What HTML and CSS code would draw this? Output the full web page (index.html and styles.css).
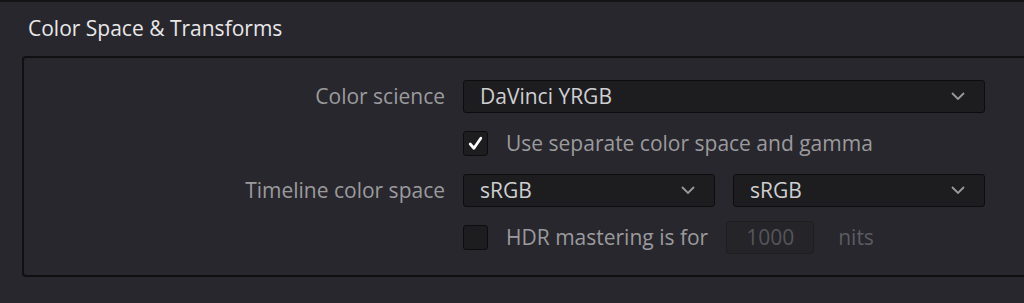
FILE: index.html
```html
<!DOCTYPE html>
<html lang="en">
<head>
<meta charset="UTF-8">
<meta name="viewport" content="width=device-width, initial-scale=1.0">
<title>Color Space &amp; Transforms</title>
<link rel="stylesheet" href="styles.css">
</head>
<body>

<div class="topline"></div>

<div class="section">
  <h1 class="section-title">Color Space &amp; Transforms</h1>

  <div class="panel">
    <div class="row">
      <label class="label">Color science</label>
      <div class="controls">
        <div class="select wide">
          <span>DaVinci YRGB</span>
          <svg class="chevron" viewBox="0 0 14 8"><path d="M1 1 L7 7 L13 1"/></svg>
        </div>
      </div>
    </div>

    <div class="row">
      <span class="label"></span>
      <div class="controls">
        <span class="checkbox checked">
          <svg viewBox="0 0 16 16"><path d="M3 8.5 L6.5 12.5 L13 3"/></svg>
        </span>
        <span class="check-text">Use separate color space and gamma</span>
      </div>
    </div>

    <div class="row">
      <label class="label">Timeline color space</label>
      <div class="controls split">
        <div class="select">
          <span>sRGB</span>
          <svg class="chevron" viewBox="0 0 14 8"><path d="M1 1 L7 7 L13 1"/></svg>
        </div>
        <div class="select">
          <span>sRGB</span>
          <svg class="chevron" viewBox="0 0 14 8"><path d="M1 1 L7 7 L13 1"/></svg>
        </div>
      </div>
    </div>

    <div class="row">
      <span class="label"></span>
      <div class="controls">
        <span class="checkbox"></span>
        <span class="check-text">HDR mastering is for</span>
        <span class="number">1000</span>
        <span class="unit">nits</span>
      </div>
    </div>
  </div>
</div>

</body>
</html>
```

FILE: styles.css
```css
body {
  margin: 0;
  padding: 0;
  background-color: #28272d;
  font-family: "Open Sans", "Liberation Sans", sans-serif;
  overflow: hidden;
}
.topline {
  height: 2px;
  background-color: #141417;
}
.section {
  padding-left: 22px;
}
.section-title {
  margin: 0;
  padding: 12px 0 0 6px;
  height: 42px;
  box-sizing: border-box;
  font-size: 21px;
  font-weight: 400;
  color: #e8e8ea;
  line-height: 28px;
}
.panel {
  margin-right: -10px;
  margin-top: 12px;
  border: 2px solid #101013;
  border-radius: 4px;
  padding: 21px 0 21px 0;
  display: flex;
  flex-direction: column;
  gap: 13px;
}
.row {
  display: flex;
  align-items: center;
  height: 34px;
}
.label {
  width: 421px;
  text-align: right;
  font-size: 21px;
  color: #9b9b9d;
  flex-shrink: 0;
}
.controls {
  margin-left: 18px;
  width: 522px;
  display: flex;
  align-items: center;
}
.controls.split {
  gap: 18px;
}
.select {
  flex: 1;
  height: 33px;
  box-sizing: border-box;
  background-color: #1d1d20;
  border: 1px solid #0d0d0f;
  border-radius: 3px;
  display: flex;
  align-items: center;
  justify-content: space-between;
  padding: 0 19px 0 16px;
  font-size: 21px;
  color: #cfcfd1;
}
.chevron {
  width: 14px;
  height: 8px;
  fill: none;
  stroke: #9a9a9c;
  stroke-width: 1.8;
}
.checkbox {
  width: 25px;
  height: 25px;
  box-sizing: border-box;
  background-color: #1d1d20;
  border: 1px solid #0d0d0f;
  border-radius: 3px;
  display: flex;
  align-items: center;
  justify-content: center;
  flex-shrink: 0;
}
.checkbox svg {
  width: 17px;
  height: 17px;
  fill: none;
  stroke: #ffffff;
  stroke-width: 2.6;
  stroke-linecap: round;
  stroke-linejoin: round;
}
.check-text {
  margin-left: 18px;
  font-size: 21px;
  color: #9b9b9d;
}
.number {
  margin-left: 18px;
  width: 88px;
  height: 33px;
  box-sizing: border-box;
  border: 1px solid #1e1e21;
  border-radius: 3px;
  background-color: #252429;
  color: #55555a;
  font-size: 21px;
  display: flex;
  align-items: center;
  justify-content: center;
}
.unit {
  margin-left: 24px;
  font-size: 21px;
  color: #5c5c60;
}
```
